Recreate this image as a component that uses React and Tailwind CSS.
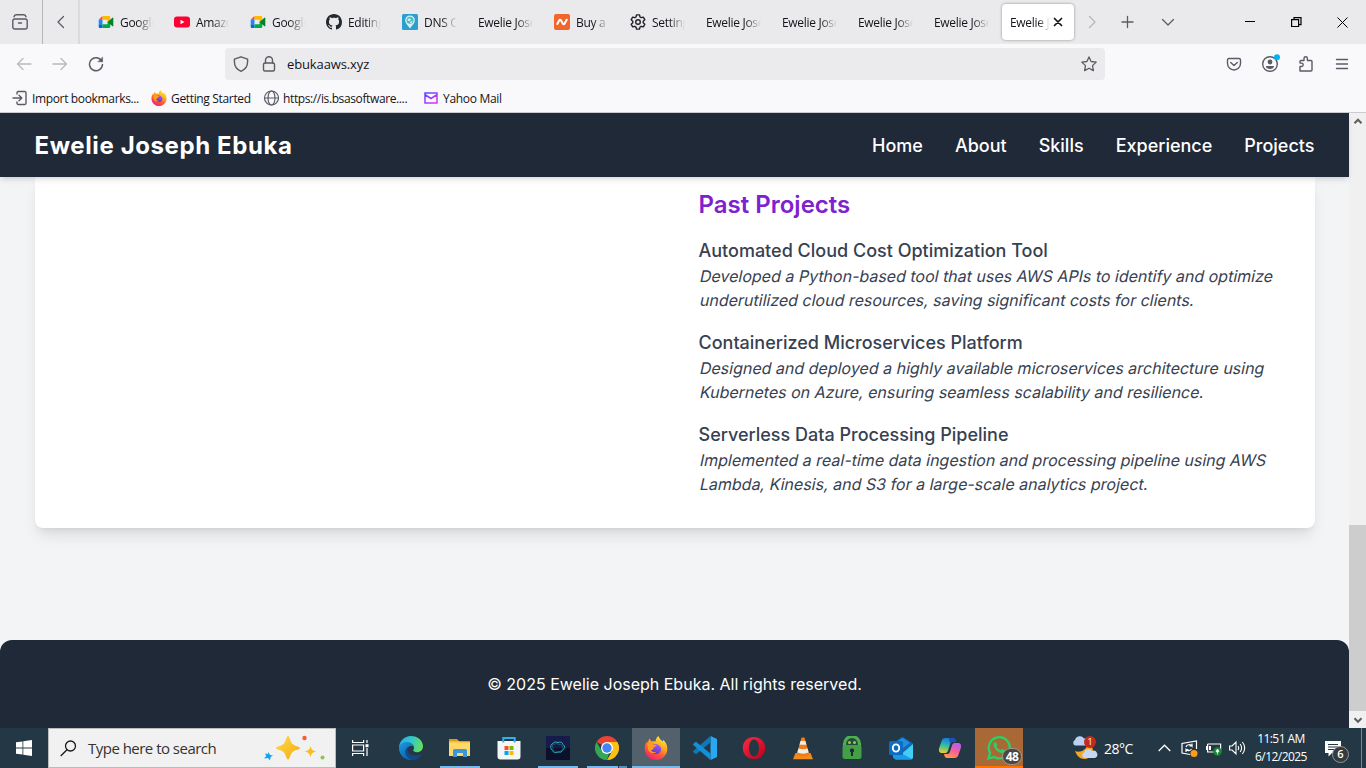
import React from "react";

const ui = "font-['Open_Sans',sans-serif]";

function Meet() {
  return (
    <svg width="16" height="16" viewBox="0 0 16 16">
      <path d="M4.5 2v3.8H.7z" fill="#ea4335" />
      <path d="M4.5 2H11a1.3 1.3 0 0 1 1.3 1.3V8L9.5 8V5.8h-5z" fill="#ffba00" />
      <path d="M.7 5.8h3.8v4.4H.7z" fill="#2684fc" />
      <path d="M.7 10.2h3.8V14H2A1.3 1.3 0 0 1 .7 12.7z" fill="#0066da" />
      <path d="M4.5 14v-3.8h5V8h2.8v4.7A1.3 1.3 0 0 1 11 14z" fill="#00ac47" />
      <path d="M9.5 8l5-4.3c.4-.3.8-.1.8.4v7.8c0 .5-.4.7-.8.4z" fill="#00832d" />
    </svg>
  );
}

function YouTube() {
  return (
    <svg width="16" height="16" viewBox="0 0 16 16">
      <rect x="0" y="2.5" width="16" height="11" rx="3" fill="#f03" />
      <path d="M6.5 5.7v4.6L10.4 8z" fill="#fff" />
    </svg>
  );
}

function GitHub() {
  return (
    <svg width="16" height="16" viewBox="0 0 16 16" fill="#24292f">
      <path d="M8 0C3.58 0 0 3.58 0 8c0 3.54 2.29 6.53 5.47 7.59.4.07.55-.17.55-.38 0-.19-.01-.82-.01-1.49-2.01.37-2.53-.49-2.69-.94-.09-.23-.48-.94-.82-1.13-.28-.15-.68-.52-.01-.53.63-.01 1.08.58 1.23.82.72 1.21 1.87.87 2.33.66.07-.52.28-.87.51-1.07-1.78-.2-3.64-.89-3.64-3.95 0-.87.31-1.59.82-2.15-.08-.2-.36-1.02.08-2.12 0 0 .67-.21 2.2.82.64-.18 1.32-.27 2-.27s1.36.09 2 .27c1.53-1.04 2.2-.82 2.2-.82.44 1.1.16 1.92.08 2.12.51.56.82 1.27.82 2.15 0 3.07-1.87 3.75-3.65 3.95.29.25.54.73.54 1.48 0 1.07-.01 1.93-.01 2.2 0 .21.15.46.55.38A8.01 8.01 0 0 0 16 8c0-4.42-3.58-8-8-8" />
    </svg>
  );
}

function DnsPin() {
  return (
    <svg width="16" height="16" viewBox="0 0 16 16">
      <rect width="16" height="16" rx="1.5" fill="#2a9fd0" />
      <path d="M8 14.5C6.300 11.500 3.200 9.500 3.200 6.200a4.800 4.800 0 0 1 9.600 0c0 3.300-3.100 5.300-4.800 8.300z" fill="#d8f0ee" />
      <circle cx="8" cy="6.300" r="3.500" fill="#4dbcc0" />
      <path d="M5.500 5.500l2-1.300 1.500 1-1 1.500-2 .3zM8.500 7.500l2-.5-.8 2-1.500.2z" fill="#d8f0ee" />
    </svg>
  );
}

function Namecheap() {
  return (
    <svg width="16" height="16" viewBox="0 0 16 16">
      <rect width="16" height="16" rx="2" fill="#f1672b" />
      <path d="M3.300 10l2-3.800c.4-.7 1.200-.7 1.600 0l2 3.500c.4.7 1.200.7 1.600 0l2.200-4" fill="none" stroke="#fff" strokeWidth="2" strokeLinecap="round" />
    </svg>
  );
}

function Gear() {
  return (
    <svg width="16" height="16" viewBox="0 0 16 16" fill="none" stroke="#222229" strokeWidth="1.400" strokeLinejoin="round">
      <path d="M6.500.900h3l.5 2.100 1.200.7 2.100-.6 1.500 2.600-1.600 1.500v1.600l1.600 1.500-1.500 2.600-2.100-.6-1.200.7-.5 2.100h-3L6 13l-1.200-.7-2.100.6-1.500-2.600 1.600-1.500V7.200L1.200 5.700l1.500-2.600 2.100.6L6 3z" />
      <circle cx="8" cy="8" r="2.300" />
    </svg>
  );
}

function Firefox({ size }) {
  return (
    <svg width={size} height={size} viewBox="0 0 24 24">
      <defs>
        <linearGradient id="foxBody" x1="0.8" y1="0" x2="0.25" y2="1">
          <stop offset="0" stopColor="#fff14a" />
          <stop offset="0.35" stopColor="#ffb31f" />
          <stop offset="0.65" stopColor="#ff5a36" />
          <stop offset="1" stopColor="#ed1c78" />
        </linearGradient>
        <linearGradient id="foxGlobe" x1="0.7" y1="0" x2="0.3" y2="1">
          <stop offset="0" stopColor="#a05cff" />
          <stop offset="1" stopColor="#5b35c0" />
        </linearGradient>
      </defs>
      <path d="M14.500 0c.6 2.300 2.200 3.700 3.900 5.200.6-.1.800-.7.700-1.400 2.600 2.100 4.200 5.400 4.200 8.900C23.300 19 18.300 24 12 24S.700 19.100.700 12.700c0-3 1-5.700 2.500-7.500.1.800.3 1.400.7 1.900.2-1.900.9-3.300 1.900-4.500.2 1.400.9 2.300 2 2.900 1.300-.3 2.600-.3 3.700 0C11.700 3.200 12.700 1.200 14.500 0z" fill="url(#foxBody)" />
      <path d="M6.600 11.200c1.300-3 4-3.800 6.300-3 3 1 4.700 3.200 4.200 5.900-.5 2.500-2.500 4-5 4-3.300 0-6-2.400-5.500-6.900z" fill="url(#foxGlobe)" />
      <path d="M3.800 7.300c2-.8 3.700.2 4.900 1.300l3.900.3c-.3 1.300-1.800 1.700-2.800 2.400-.3 1.700-.4 2.700-2.700 2.700.5 2 3 2.700 5.400 1.800-2 2.400-6.400 2-8-1.200-.9-2-1.300-4.900-.7-7.300z" fill="#ff9a20" />
    </svg>
  );
}

function Line({ size = 16, children, color = "#5b5b66", w = 1.3, cls = "" }) {
  return (
    <svg width={size} height={size} viewBox={"0 0 16 16"} fill="none" stroke={color} strokeWidth={w} strokeLinecap="round" strokeLinejoin="round" className={cls}>
      {children}
    </svg>
  );
}

const tabs = [
  { icon: <Meet />, text: "Google" },
  { icon: <YouTube />, text: "Amazo" },
  { icon: <Meet />, text: "Google" },
  { icon: <GitHub />, text: "Editing" },
  { icon: <DnsPin />, text: "DNS C" },
  { text: "Ewelie Jose" },
  { icon: <Namecheap />, text: "Buy a d" },
  { icon: <Gear />, text: "Setting" },
  { text: "Ewelie Jose" },
  { text: "Ewelie Jose" },
  { text: "Ewelie Jose" },
  { text: "Ewelie Jose" },
];

function TabStrip() {
  return (
    <div className="flex h-11 items-stretch bg-[#eaeaec] text-[12px] tracking-[-0.3px] text-[#15141a]">
      <div className="flex w-[43px] items-center border-r border-[#b5b5b8] pl-3">
        <Line size={16} w={1.4}>
          <rect x="0.800" y="5" width="14.400" height="10" rx="2" />
          <path d="M2 2.800Q2.300.700 4 .700h8q1.700 0 2 2.100M6.500 9h3" />
        </Line>
      </div>
      <div className="flex w-[35px] items-center justify-center">
        <Line w={1.3}><path d="M10.500 2.500L5 8l5.500 5.500" /></Line>
      </div>
      <div className="w-3 border-l-2 border-[#dadadc]" />
      {tabs.map((t, i) => (
        <div key={i} className="flex w-[76px] shrink-0 items-center gap-[6px] pl-2 pr-[13px]">
          {t.icon && <span className="shrink-0">{t.icon}</span>}
          <span className="min-w-0 flex-1 overflow-hidden whitespace-nowrap pt-0.5 [mask-image:linear-gradient(to_left,transparent,black_16px)]">{t.text}</span>
        </div>
      ))}
      <div className="my-1 flex w-[72px] shrink-0 items-center rounded bg-white pl-2 shadow-[0_0_3px_rgba(0,0,0,0.4)]">
        <span className="w-[40px] overflow-hidden whitespace-nowrap pt-0.5 [mask-image:linear-gradient(to_left,transparent,black_12px)]">Ewelie J</span>
        <Line size={16} color="#15141a" w={1.7}><path d="M4.500 4.500l7 7M11.500 4.500l-7 7" /></Line>
      </div>
      <div className="flex items-center pl-[10px]">
        <Line color="#b5b5ba"><path d="M5.500 2.500L11 8l-5.500 5.500" /></Line>
        <Line cls="ml-5" w={1.300}><path d="M7.500 2.500v11M2 8h11" /></Line>
        <Line cls="ml-6" w={1.300}><path d="M2.500 5.500L8 11l5.500-5.500" /></Line>
      </div>
      <div className="ml-auto flex items-center pr-[18px]">
        <svg width="10" height="10" viewBox="0 0 10 10"><path d="M0 4.500h10" stroke="#000" /></svg>
        <svg className="ml-9" width="11" height="10" viewBox="0 0 11 10" fill="none" stroke="#000" strokeWidth="1.200"><path d="M.6 2.600h7v7h-7zM3 2.600V.6h7v7H7.600" /></svg>
        <svg className="ml-[35px]" width="11" height="11" viewBox="0 0 11 11"><path d="M.5.500l10 10M10.500.500l-10 10" stroke="#000" /></svg>
      </div>
    </div>
  );
}

function Toolbar() {
  return (
    <div className="flex h-10 items-center bg-[#f9f9fb] pl-4 pr-4">
      <Line color="#b9b9bf" w={1.300}><path d="M15 8H1.500M7 2.500L1.500 8 7 13.500" /></Line>
      <Line cls="ml-5" color="#b9b9bf" w={1.300}><path d="M1 8h13.500M9 2.500L14.500 8 9 13.500" /></Line>
      <Line cls="ml-5" w={1.500}><path d="M13.800 5.300A6.500 6.500 0 1 0 14.500 8.500" /><path d="M14.600 1.300v4.500h-4.500z" fill="#5b5b66" strokeWidth="0.500" /></Line>
      <div className="ml-[121px] flex h-8 w-[880px] items-center rounded bg-[#ebebed] px-2">
        <Line w={1.400}><path d="M8 .8l6.600 2.300v2.700C14.600 10.500 12 13.700 8 15.300 4 13.700 1.400 10.500 1.400 5.800V3.100z" /></Line>
        <Line cls="ml-3" w={1.400}><rect x="2.500" y="7" width="11" height="8" rx="1.500" /><path d="M4.500 7V4.200a3.500 3.500 0 0 1 7 0V7" /></Line>
        <span className="ml-[10px] pt-0.5 text-[13px] tracking-[-0.12px] text-[#15141a]">ebukaaws.xyz</span>
        <Line cls="ml-auto" w={1.300}><path d="M8 .9l2.100 4.600 5.100.6-3.700 3.500.9 5L8 12.200l-4.400 2.400.9-5L.8 6.100l5.100-.6z" /></Line>
      </div>
      <div className="ml-auto flex items-center gap-5">
        <Line w={1.400}><path d="M3 2.500h10A1.600 1.600 0 0 1 14.500 4v3.500a6.500 6.500 0 0 1-13 0V4A1.600 1.600 0 0 1 3 2.500zM4.700 6.500L8 9.500l3.300-3" /></Line>
        <svg width="20" height="20" viewBox="0 0 20 20" className="-mr-[2px] -ml-0.5" fill="none">
          <circle cx="10" cy="10" r="7.300" stroke="#5b5b66" strokeWidth="1.400" />
          <circle cx="10" cy="8" r="2.400" fill="#5b5b66" />
          <path d="M6 12h8c0 2-1.800 3-4 3s-4-1-4-3z" fill="#5b5b66" />
          <circle cx="17" cy="3.300" r="3" fill="#00b3f4" />
        </svg>
        <Line w={1.400}><path d="M2 15V10.500h1.500a1.700 1.700 0 0 0 0-3.400H2V5.500a1 1 0 0 1 1-1h3V2.500a1.700 1.700 0 0 1 3.400 0v2H13a1 1 0 0 1 1 1V14a1 1 0 0 1-1 1z" /></Line>
        <Line w={1.400}><path d="M2.500 3.500h11M2.500 8h11M2.500 12.500h11" /></Line>
      </div>
    </div>
  );
}

function Bookmarks() {
  return (
    <div className="flex h-[29px] items-center border-b border-[#ccccd0] bg-[#f9f9fb] pl-3 text-[12px] text-[#15141a]">
      <div className="flex w-[139px] items-center gap-1">
        <Line w={1.400}><path d="M5 4V2.800A1.300 1.300 0 0 1 6.300 1.500h6.400A1.300 1.300 0 0 1 14 2.800v10.400a1.300 1.300 0 0 1-1.300 1.300H6.300A1.300 1.300 0 0 1 5 13.200V12M1 8h8.500M7 5.200L9.800 8 7 10.800" /></Line>
        <span className="whitespace-nowrap pt-0.5 tracking-[-0.35px]">Import bookmarks...</span>
      </div>
      <div className="flex w-[112px] items-center gap-1">
        <Firefox size={16} />
        <span className="whitespace-nowrap pt-0.5 tracking-[-0.34px]">Getting Started</span>
      </div>
      <div className="flex w-[160px] items-center gap-1">
        <Line w={1.200}><circle cx="8.500" cy="8" r="7" /><ellipse cx="8.500" cy="8" rx="3.500" ry="7" /><path d="M1.500 8h14" /></Line>
        <span className="whitespace-nowrap pt-0.5 tracking-[-0.38px]">https://is.bsasoftware....</span>
      </div>
      <div className="flex items-center gap-1">
        <svg width="16" height="16" viewBox="0 0 16 16" fill="none" strokeWidth="1.500">
          <defs><linearGradient id="mail" x1="0" y1="0" x2="1" y2="1"><stop offset="0" stopColor="#5b4bff" /><stop offset="1" stopColor="#e032f0" /></linearGradient></defs>
          <path d="M2 3h12v10H2zM2.500 5l5.500 3.500L13.500 5" stroke="url(#mail)" />
        </svg>
        <span className="whitespace-nowrap pt-0.5 tracking-[-0.3px]">Yahoo Mail</span>
      </div>
    </div>
  );
}

const projects = [
  ["Automated Cloud Cost Optimization Tool", "Developed a Python-based tool that uses AWS APIs to identify and optimize", "underutilized cloud resources, saving significant costs for clients."],
  ["Containerized Microservices Platform", "Designed and deployed a highly available microservices architecture using", "Kubernetes on Azure, ensuring seamless scalability and resilience."],
  ["Serverless Data Processing Pipeline", "Implemented a real-time data ingestion and processing pipeline using AWS", "Lambda, Kinesis, and S3 for a large-scale analytics project."],
];

const slanted = "block w-fit origin-[0_18px] -skew-x-[12deg]";

function Page() {
  return (
    <div className="flex h-[615px]">
      <div className="flex w-[1349px] flex-col bg-[#f3f4f6] font-[Inter,sans-serif]">
        <nav className="z-10 flex h-16 shrink-0 items-center justify-between bg-[#1f2937] px-[34.500px] pt-0.5 text-white shadow-md">
          <div className="text-2xl font-bold tracking-[0.6px]">Ewelie Joseph Ebuka</div>
          <div className="flex gap-8 text-lg font-medium">
            <a>Home</a><a>About</a><a>Skills</a><a>Experience</a><a>Projects</a>
          </div>
        </nav>
        <main className="mx-[34.500px] flex h-[351px] shrink-0 justify-end rounded-b-lg bg-white pr-8 shadow-lg">
          <div className="w-[584px] pt-3">
            <h2 className="text-2xl font-semibold text-[#7e22ce]">Past Projects</h2>
            <div className="mt-4 flex flex-col gap-4">
              {projects.map(([title, a, b]) => (
                <div key={title} className="whitespace-nowrap text-[#374151]">
                  <h3 className="-mb-px text-lg font-medium">{title}</h3>
                  <p className="mb-px"><span className={slanted}>{a}</span><span className={slanted}>{b}</span></p>
                </div>
              ))}
            </div>
          </div>
        </main>
        <footer className="mt-28 flex h-[88px] items-center justify-center rounded-t-xl bg-[#1f2937] text-white">
          <p>© 2025 Ewelie Joseph Ebuka. All rights reserved.</p>
        </footer>
      </div>
      <div className="flex w-[17px] flex-col items-center justify-between bg-[#f0f0f0]">
        <div className="flex h-[17px] items-center"><Line size={14} w={2.400} color="#606060"><path d="M4 9.500l4-4 4 4" strokeLinecap="butt" strokeLinejoin="miter" /></Line></div>
        <div className="mt-auto h-[186px] w-full bg-[#cdcdcd]" />
        <div className="flex h-[17px] items-center"><Line size={14} w={2.400} color="#606060"><path d="M4 6l4 4 4-4" strokeLinecap="butt" strokeLinejoin="miter" /></Line></div>
      </div>
    </div>
  );
}

function Edge() {
  return (
    <svg width="24" height="24" viewBox="0 0 24 24">
      <defs>
        <linearGradient id="edgeTop" x1="0" y1="0.300" x2="1" y2="0.500"><stop offset="0" stopColor="#29a9e8" /><stop offset="0.5" stopColor="#35c8c8" /><stop offset="1" stopColor="#66e05a" /></linearGradient>
        <linearGradient id="edgeLow" x1="0" y1="0" x2="0.700" y2="1"><stop offset="0" stopColor="#1b9de2" /><stop offset="1" stopColor="#0c58a8" /></linearGradient>
      </defs>
      <path d="M0 12C0 5 5.400 0 12 0s12 4.800 12 10.300c0 3.800-2.800 6-5.800 6-2.700 0-4-1.100-4-2 0-.6.800-1 .8-2.400C15 9 12.500 7 8.800 7 4 7 .5 9.500 0 12z" fill="url(#edgeTop)" />
      <path d="M0 12C.5 8.500 3.600 6 7.600 6c4 0 6.500 2 7 4.500-4-1.500-7 1-7 4.500 0 5 4.400 8.300 8.400 9-8 1.600-16-3.500-16-12z" fill="url(#edgeLow)" />
      <path d="M9.500 10.800c-2 4 .5 9 6 9 3 0 5-.8 6.700-1.700.4-.2.700.2.400.6C20.500 22 17 24 14.500 24c-4.500-.5-8.500-4.500-8.200-8.500.1-2 1.200-3.800 3.200-4.700z" fill="#114a8b" />
    </svg>
  );
}

function Explorer() {
  return (
    <svg width="24" height="24" viewBox="0 0 24 24">
      <path d="M1 3.300h8l2 2h11V20H1z" fill="#f8c84a" /><path d="M1 3.300h8l1.500 2H1z" fill="#d99a19" />
      <path d="M1 7h21v13H1z" fill="#ffd966" />
      <path d="M5 21v-6.500A1.500 1.500 0 0 1 6.500 13h11a1.500 1.500 0 0 1 1.500 1.500V21h-4v-4H9v4z" fill="#3c96dc" />
    </svg>
  );
}

function Store() {
  return (
    <svg width="24" height="24" viewBox="0 0 24 24">
      <path d="M.5 5h23v15.500a3 3 0 0 1-3 3h-17a3 3 0 0 1-3-3z" fill="#f5f5f5" />
      <path d="M6.300 6.500V2h11.400v4.500" fill="none" stroke="#2bb3ec" strokeWidth="2" />
      <path d="M7.500 10H11.500v4H7.500z" fill="#f25022" /><path d="M12.500 10h4v4h-4z" fill="#7fba00" /><path d="M7.500 15h4v4h-4z" fill="#00a4ef" /><path d="M12.500 15h4v4h-4z" fill="#ffb900" />
    </svg>
  );
}

function Swirl() {
  return (
    <svg width="24" height="24" viewBox="0 0 24 24">
      <rect width="24" height="24" fill="#151b4a" /><path d="M0 12h24v12H0z" fill="#0a0c20" opacity=".7" />
      <g fill="none" strokeWidth="1">
        <path d="M6 8q3-3.500 6-1.500 4-1.500 5 2 3.500 3 0 5-1.500 4-5 2.500-4 2-5.500-1.500-3.500-3-.5-6.500z" stroke="#26b5a5" />
        <path d="M7 8.500q5-2 6 0 4-.5 3.500 3 2 3-2 3.500-3.500 2.500-5 0-3.500.500-2.500-3-1.500-2 0-3.500z" stroke="#2785a5" strokeWidth=".5" />
      </g>
    </svg>
  );
}

function Chrome() {
  return (
    <svg width="24" height="24" viewBox="0 0 24 24">
      <path d="M12 12L1.600 6A12 12 0 0 1 22.400 6z" fill="#ea4335" />
      <path d="M12 6h10.400A12 12 0 0 1 12 24l5.200-9z" fill="#fbc116" />
      <path d="M1.600 6l5.200 9 5.200 3 2 -.4L12 24A12 12 0 0 1 1.600 6z" fill="#34a853" />
      <circle cx="12" cy="12" r="6" fill="#fff" /><circle cx="12" cy="12" r="4.700" fill="#4285f4" />
    </svg>
  );
}

function Code() {
  return (
    <svg width="24" height="24" viewBox="0 0 24 24">
      <path d="M17.500 0L24 3v18l-6.500 3z" fill="#2aa7f2" />
      <path d="M17.500 0v6.500L3 18.300l-2.700-2.100c-.4-.4-.4-1 0-1.300z" fill="#0f78bd" />
      <path d="M17.500 24v-6.500L3 5.700.3 7.800c-.4.400-.4 1 0 1.300z" fill="#1490d8" />
    </svg>
  );
}

function Opera() {
  return (
    <svg width="24" height="24" viewBox="0 0 24 24">
      <defs><linearGradient id="op" x1="0" y1="0" x2="1" y2="1"><stop offset="0" stopColor="#ff2b43" /><stop offset="1" stopColor="#b5001b" /></linearGradient></defs>
      <path fillRule="evenodd" d="M12 1c6.500 0 11.200 4.600 11.200 11S18.500 23 12 23 .800 18.400.800 12 5.500 1 12 1zm0 2.500c-3.200 0-4.900 3.800-4.900 8.500s1.700 8.500 4.900 8.500 4.900-3.800 4.900-8.500-1.700-8.500-4.900-8.500z" fill="url(#op)" />
    </svg>
  );
}

function Vlc() {
  return (
    <svg width="24" height="24" viewBox="0 0 24 24">
      <path d="M4.500 17h15l2.500 6.300H2z" fill="#f28a1c" /><path d="M10.500 1.500h3L18.500 19q-6.500 3-13 0z" fill="#f07e12" />
      <path d="M9.600 5h4.800l1 3.800H8.500zM7.500 12.500q4.500 1.500 9 0l1.200 4q-5.700 2.300-11.400 0z" fill="#eeeeec" />
    </svg>
  );
}

function Lock() {
  return (
    <svg width="24" height="24" viewBox="0 0 24 24">
      <path d="M4.500 10V8a7.500 7.500 0 0 1 15 0v2" fill="#274a38" stroke="#4caf50" strokeWidth="3.200" />
      <circle cx="9.500" cy="6.500" r="1.500" fill="#91c95c" /><circle cx="14.500" cy="6.500" r="1.500" fill="#91c95c" />
      <rect x="2.500" y="9" width="19" height="14" rx="2.500" fill="#43a047" />
      <path d="M12 12.500a2 2 0 0 1 1 3.800V20h-2v-3.700a2 2 0 0 1 1-3.800z" fill="#202a30" />
    </svg>
  );
}

function Outlook() {
  return (
    <svg width="24" height="24" viewBox="0 0 24 24">
      <path d="M3.500 7.500L13.500.7 24 7.500V20l-3 3H6l-2.500-3z" fill="#1067b8" />
      <path d="M7 6l6.500-4L21 6.700 13 13z" fill="#2290df" />
      <path d="M24 8v13a2.500 2.500 0 0 1-2.500 2.500H6z" fill="#43cdf4" /><path d="M4 13l19 10H6.500A2.500 2.500 0 0 1 4 20.500z" fill="#1b9ae5" />
      <rect y="5" width="14" height="14" rx="1.500" fill="#0f6cc4" />
      <ellipse cx="7" cy="12" rx="3.200" ry="3.600" fill="none" stroke="#fff" strokeWidth="1.900" />
    </svg>
  );
}

function Copilot() {
  return (
    <svg width="24" height="24" viewBox="0 0 24 24">
      <defs>
        <linearGradient id="cpA" x1="0.500" y1="0" x2="0.300" y2="1"><stop offset="0" stopColor="#1779df" /><stop offset="0.500" stopColor="#30bda5" /><stop offset="1" stopColor="#e6cf2b" /></linearGradient>
        <linearGradient id="cpB" x1="0.700" y1="0" x2="0.300" y2="1"><stop offset="0" stopColor="#b560ee" /><stop offset="0.500" stopColor="#f5609a" /><stop offset="1" stopColor="#ff9a4a" /></linearGradient>
      </defs>
      <path d="M7.500 2h7.500c2 0 2.500 2 3 4h-3.500c-1.500 0-2 1-2.500 2.500l-2 6C9.400 16.500 8.500 17 6.500 17H4C1 17 .5 14.500 1.200 12l2.400-7C4.200 3 5.500 2 7.500 2z" fill="url(#cpA)" />
      <path d="M16.500 22H9c-2 0-2.500-2-3-4h3.500c1.500 0 2-1 2.500-2.500l2-6C14.600 7.500 15.500 7 17.500 7H20c3 0 3.500 2.500 2.800 5l-2.400 7c-.6 2-1.900 3-3.900 3z" fill="url(#cpB)" />
      <path d="M11 2h4c2 0 2.500 2 3 4h-3.500c-1.300 0-2 .8-2.400 2z" fill="#1b50bd" />
    </svg>
  );
}

function WhatsApp() {
  return (
    <svg width="24" height="24" viewBox="0 0 24 24">
      <path d="M1.500 22.500l1.600-5.700a10.500 10.500 0 1 1 4.100 4.100z" fill="none" stroke="#25d366" strokeWidth="2.300" />
      <path d="M8.500 6c-1 .1-2 1.100-2 2.700 0 3.300 4.700 8 8 8.300 2 .1 3.300-1.200 3.300-2.800l-2.800-1.400-1.400 1.500c-1.700-.6-3.500-2.300-4.200-4l1.200-1.400z" fill="#25d366" />
    </svg>
  );
}

const apps = [
  { icon: <Edge /> }, { icon: <Explorer />, bar: true }, { icon: <Store /> }, { icon: <Swirl />, bar: true }, { icon: <Chrome />, bar: true, multi: true },
  { icon: <Firefox size={24} />, bar: true, active: true }, { icon: <Code /> }, { icon: <Opera /> }, { icon: <Vlc /> }, { icon: <Lock /> }, { icon: <Outlook /> }, { icon: <Copilot /> },
];

function Taskbar() {
  return (
    <div className="flex h-10 bg-[#243744] text-white">
      <div className="flex w-12 items-center justify-center">
        <svg width="16" height="16" viewBox="0 0 16 16" fill="#fff"><path d="M0 2.300l6.500-.9v6.200H0zM7.300 1.300L16 0v7.600H7.300zM0 8.400h6.500v6.200L0 13.700zM7.300 8.400H16V16l-8.700-1.200z" /></svg>
      </div>
      <div className="flex w-[288px] items-center border border-[#b8bcbf] bg-[#f1f1f1] pl-[11px] text-[#333]">
        <svg width="17" height="17" viewBox="0 0 17 17" fill="none" stroke="#1a1a1a" strokeWidth="1.300"><circle cx="10.500" cy="6" r="5" /><path d="M7 9.700L.7 16" /></svg>
        <span className="ml-[11px] text-[15px] tracking-[-0.52px]">Type here to search</span>
        <svg className="ml-auto mr-[9px]" width="64" height="30" viewBox="0 0 64 30">
          <defs><linearGradient id="star" x1="0" y1="0" x2="1" y2="1"><stop offset="0" stopColor="#ffdc45" /><stop offset="1" stopColor="#f3aa12" /></linearGradient></defs>
          <path d="M26 3c1.500 0 2 5 4 7.500s8 3 8 4.500-6 2-8 4.500-2.500 7-4 7-2-4.500-4-7-8-3-8-4.500 6-2 8-4.500S24.500 3 26 3z" fill="url(#star)" />
          <path d="M48.500 13c1 3.500 2 4.500 5.500 5.500-3.500 1-4.500 2-5.500 5.500-1-3.500-2-4.500-5.500-5.500 3.500-1 4.500-2 5.500-5.500z" fill="#f9bc26" />
          <path d="M6.500 19l1.500 3 3 .5-2.300 1.500-.7 3.500-2-2.500-4 .5 2.300-2.500L3 20.500l3 .5z" fill="#12a5ec" />
          <circle cx="42.500" cy="5" r="2.200" fill="#f25f33" /><circle cx="60.500" cy="24.500" r="2" fill="#8cc640" />
        </svg>
      </div>
      <div className="flex w-[51px] items-center justify-center pr-[3px]">
        <svg width="17" height="16" viewBox="0 0 17 16" fill="none" stroke="#fff" strokeWidth="1.200"><path d="M.6 0v2.500h11V0M.6 5h11v6H.6zM.6 16v-2.500h11V16M15 0v3M15 8v8" /><path d="M13.500 4.200h3v3h-3z" fill="#fff" stroke="none" /></svg>
      </div>
      {apps.map((a, i) => (
        <div key={i} className={"flex w-[49px] flex-col items-center " + (i === 0 ? "-ml-px" : "")}>
          <div className={"flex h-[38px] w-12 items-center justify-center pt-0.5 " + (a.active ? "bg-[#53616c]" : "")}>{a.icon}</div>
          {a.bar && (
            <div className={"flex h-0.5 bg-[#76b9ed] " + (a.active ? "w-12" : "w-10")}>
              {a.multi && <div className="ml-auto w-[9px] border-l border-[#243744] bg-[#5b8db8]" />}
            </div>
          )}
        </div>
      ))}
      <div className="relative ml-px flex w-12 items-center justify-center border-b-2 border-[#ff7400] bg-[#a96937] pt-0.5">
        <WhatsApp />
        <span className="absolute bottom-px right-px flex h-[17px] w-5 items-center justify-center rounded-full border border-[#a49a92] bg-[#4c4742] text-[12px] font-bold tracking-[-0.5px]">48</span>
      </div>
      <div className="relative ml-[49px] flex items-center">
        <svg width="26" height="24" viewBox="0 0 26 24">
          <path d="M3 15c4 2 11 0 13-7 8 3 6 14-3 15-5 .3-8-3-10-8z" fill="#f5a623" />
          <path d="M3 9.500a3 3 0 0 1 0-5.500 5 5 0 0 1 9-1.500 3.500 3.500 0 0 1 2 7z" fill="#bcd0f2" />
          <path d="M12 22a3 3 0 0 1 0-5.500 4.500 4.500 0 0 1 8-1.500 3.500 3.500 0 0 1 3 7z" fill="#c7d8f5" />
        </svg>
        <span className="absolute left-[12px] top-[8px] flex h-3 w-3 items-center justify-center rounded-full bg-[#c42b1c] text-[9px]">1</span>
        <span className="ml-[6px] text-[14px] tracking-[-0.5px]">28°C</span>
      </div>
      <div className="ml-auto flex items-center">
        <svg width="13" height="8" viewBox="0 0 13 8" fill="none" stroke="#fff" strokeWidth="1.300"><path d="M.7 7L6.500 1.200 12.300 7" /></svg>
        <svg className="ml-[10px]" width="17" height="17" viewBox="0 0 17 17" fill="none" stroke="#fff" strokeWidth="1.200">
          <path d="M9 14.500L1 13V3.500L15.500 1v8M5 7a3.500 3.500 0 0 1 6-1V3.500M11 6H8.500M10.500 9a3.500 3.500 0 0 1-5.500.5V12M5 9.500h2.500" /><circle cx="13" cy="13.500" r="3.500" fill="#ff9d14" stroke="none" />
        </svg>
        <svg className="ml-2" width="16" height="16" viewBox="0 0 16 16" fill="none" stroke="#fff" strokeWidth="1.200">
          <path d="M1.600 4h13v7M8 12H1.600V4M.6 6v4" /><path d="M3 6h2v4H3z" fill="#fff" stroke="none" /><circle cx="11.500" cy="11.500" r="4.200" fill="#128a2d" stroke="none" /><path d="M11.500 9l1.600 2.300-1.600 1.500-1.600-1.500zM11.500 12v2.500" fill="#fff" strokeWidth=".6" />
        </svg>
        <svg className="ml-[7px]" width="17" height="16" viewBox="0 0 17 16" fill="none" stroke="#fff" strokeWidth="1.100">
          <path d="M.6 6h2.500L7 2v12L3.100 10H.6zM9 6q1.400 2 0 4M11.200 4q2.800 4 0 8M13.400 2q4.600 6 0 12" />
        </svg>
        <div className="ml-[7px] flex w-[56px] flex-col items-center whitespace-nowrap text-[12px] leading-[18px] tracking-[-0.55px]">
          <span>11:51 AM</span><span>6/12/2025</span>
        </div>
        <div className="relative ml-[16px] flex h-10 w-[41px] items-center">
          <svg width="16" height="17" viewBox="0 0 16 17"><path d="M0 1h16v12H7l-3.500 3.500V13H0z" fill="#fff" /><path d="M3 4.500h10M3 7h10M3 9.500h7" stroke="#243744" strokeWidth="1.100" /></svg>
          <span className="absolute left-[7px] top-[18px] flex h-[17px] w-[17px] items-center justify-center rounded-full border border-[#929698] bg-[#373a3d] text-[11px] font-semibold">6</span>
          <span className="absolute right-[4px] top-0 h-10 w-px bg-[#7d878f]" />
        </div>
      </div>
    </div>
  );
}

export default function App() {
  return (
    <div className={"h-[768px] w-[1366px] overflow-hidden " + ui}>
      <TabStrip />
      <Toolbar />
      <Bookmarks />
      <Page />
      <Taskbar />
    </div>
  );
}
